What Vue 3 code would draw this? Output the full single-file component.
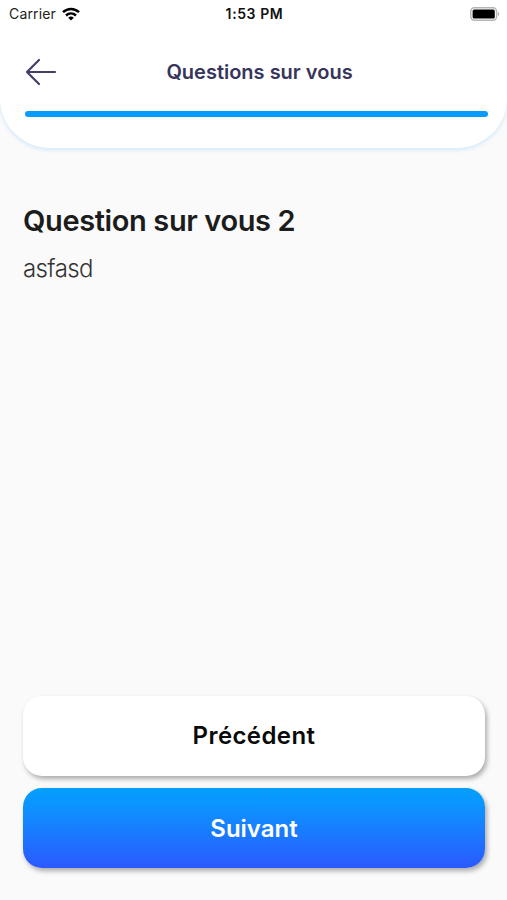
<template>
    <div class="screen">
        <header class="header">
            <div class="status-bar">
                <div class="carrier">
                    <span class="carrier-name">Carrier</span>
                    <svg class="wifi" viewBox="0 0 18 14" fill="none" stroke="#000" stroke-width="2.5">
                        <path d="M1 5.2C5.6 .8 12.4 .8 17 5.2" />
                        <path d="M4 8.5C6.9 5.8 11.1 5.8 14 8.5" />
                        <path d="M6.2 10.8Q9 8.4 11.8 10.8L9 13.6Z" fill="#000" stroke="none" />
                    </svg>
                </div>
                <span class="time">1:53 PM</span>
                <svg class="battery" viewBox="0 0 30 14">
                    <rect x=".8" y=".8" width="25.8" height="12.4" rx="3.6" fill="#fff" stroke="#b5b5b5" stroke-width="1.4" />
                    <rect x="2.6" y="2.5" width="22.2" height="9" rx="1.6" fill="#000" />
                    <path d="M28 4.8Q30.4 7 28 9.2Z" fill="#a8a8a8" />
                </svg>
            </div>

            <div class="nav">
                <button class="back" aria-label="Retour" @click="previous">
                    <svg viewBox="0 0 32 28" fill="none" stroke="#423e68" stroke-width="2.2" stroke-linecap="round" stroke-linejoin="round">
                        <path d="M30 14H2M14 2L2 14L14 26" />
                    </svg>
                </button>
                <h1 class="nav-title">Questions sur vous</h1>
            </div>

            <div class="progress">
                <div class="progress-bar" :style="{ width: progress + '%' }"></div>
            </div>
        </header>

        <main class="content">
            <h2 class="question">{{ question.title }}</h2>
            <p class="description">{{ question.description }}</p>
        </main>

        <footer class="actions">
            <button class="btn btn-previous" @click="previous">Précédent</button>
            <button class="btn btn-next" @click="next">Suivant</button>
        </footer>
    </div>
</template>

<script setup>
import { ref, computed } from 'vue'

const questions = [
    { title: 'Question sur vous 1', description: 'asfasd' },
    { title: 'Question sur vous 2', description: 'asfasd' }
]

const current = ref(1)

const question = computed(() => questions[current.value])
const progress = computed(() => ((current.value + 1) / questions.length) * 100)

function previous() {
    if (current.value > 0) current.value--
}

function next() {
    if (current.value < questions.length - 1) current.value++
}
</script>

<style>
body {
    margin: 0;
    background: #fafafa;
}
</style>

<style scoped>
.screen {
    display: flex;
    flex-direction: column;
    height: 100vh;
    overflow: hidden;
    background: #fafafa;
    font-family: Inter, "Liberation Sans", sans-serif;
}

.header {
    box-sizing: border-box;
    flex: none;
    height: 148px;
    background: #fff;
    border-radius: 0 0 50px 50px;
    box-shadow: 0 2px 4px rgba(0, 140, 255, 0.16);
}

.status-bar {
    display: grid;
    grid-template-columns: 1fr auto 1fr;
    align-items: center;
    height: 27px;
    padding: 0 7px 0 9px;
}

.carrier {
    display: flex;
    align-items: center;
    gap: 6px;
}

.carrier-name {
    font-size: 14px;
    line-height: 20px;
    letter-spacing: 0.15px;
    color: #222;
}

.wifi {
    width: 18px;
    height: 14px;
}

.time {
    font-size: 14px;
    font-weight: 600;
    letter-spacing: 0.6px;
    color: #111;
}

.battery {
    justify-self: end;
    width: 30px;
    height: 14px;
}

.nav {
    display: grid;
    grid-template-columns: 32px 1fr 32px;
    align-items: center;
    height: 90px;
    margin-bottom: -6px;
    padding: 0 13px 0 25px;
}

.back {
    display: flex;
    padding: 0;
    border: 0;
    background: none;
    cursor: pointer;
}

.back svg {
    width: 32px;
    height: 28px;
}

.nav-title {
    margin: 0;
    font-size: 20px;
    font-weight: 600;
    text-align: center;
    color: #37345c;
}

.progress {
    height: 6px;
    margin: 0 19px 0 25px;
}

.progress-bar {
    height: 100%;
    border-radius: 3px;
    background: #079bfa;
}

.content {
    flex: 1;
    padding: 55px 23px 0;
}

.question {
    margin: 0;
    font-size: 29px;
    font-weight: 600;
    line-height: 36px;
    letter-spacing: -0.38px;
    color: #1c1c1c;
}

.description {
    margin: 15px 0 0;
    font-size: 24px;
    font-weight: 300;
    line-height: 30px;
    letter-spacing: -0.6px;
    color: #333;
}

.actions {
    display: flex;
    flex-direction: column;
    gap: 12px;
    padding: 0 22px 32px 23px;
}

.btn {
    height: 80px;
    border: 0;
    border-radius: 19px;
    font-family: inherit;
    font-size: 24px;
    font-weight: 600;
    box-shadow: 2px 3px 5px rgba(0, 0, 0, 0.32);
    cursor: pointer;
}

.btn-previous {
    padding-bottom: 3px;
    letter-spacing: 0.4px;
    background: #fff;
    color: #0a0a0a;
}

.btn-next {
    background: linear-gradient(180deg, #049ffa 0%, #0c94ff 22%, #2b59ff 100%);
    color: #fff;
}
</style>
